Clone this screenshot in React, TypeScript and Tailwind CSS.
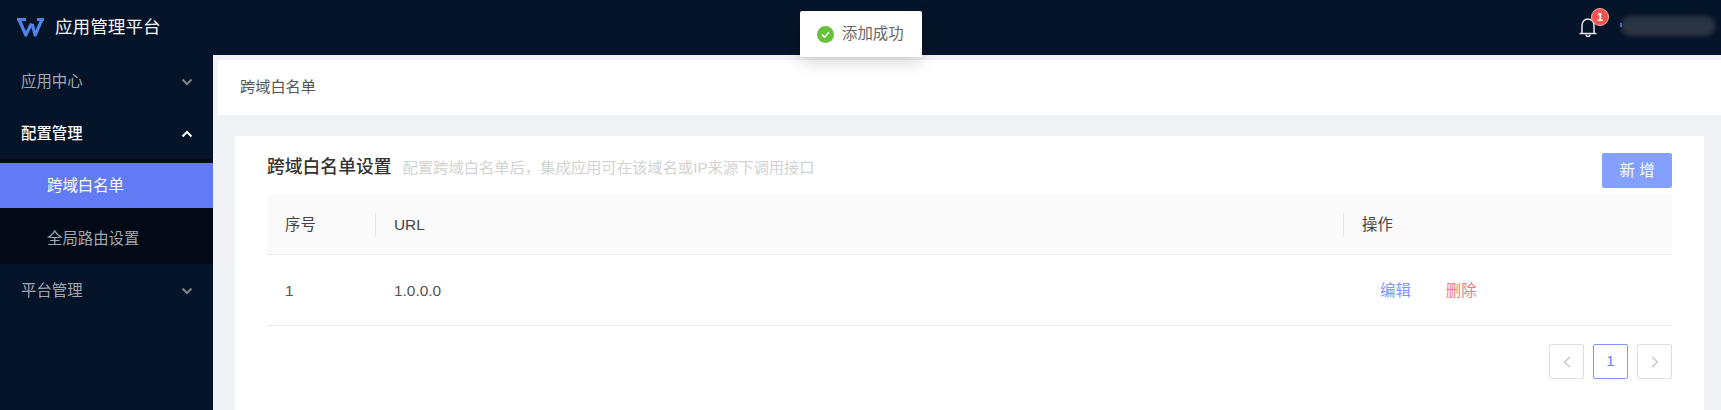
const fontStack = "font-['Liberation_Sans','Noto_Sans_CJK_SC',sans-serif]";

function Chevron({ up, light }: { up?: boolean; light?: boolean }) {
  return (
    <svg width="12" height="8" viewBox="0 0 12 8" fill="none" className={light ? "text-white" : "text-[#7d838d]"}>
      <path d={up ? "M1.5 6.5 L6 2 L10.5 6.5" : "M1.5 1.5 L6 6 L10.5 1.5"} stroke="currentColor" strokeWidth="2" />
    </svg>
  );
}

function MenuItem({ label, open }: { label: string; open?: boolean }) {
  return (
    <div className={`flex h-[52px] items-center justify-between pl-[21px] pr-[20px] pt-[2px] text-[15.4px] ${open ? "font-medium text-white" : "text-[#a3a7ad]"}`}>
      <span>{label}</span>
      <Chevron up={open} light={open} />
    </div>
  );
}

function PageButton({ children, active }: { children: React.ReactNode; active?: boolean }) {
  return (
    <div className={`flex h-[35px] w-[35px] items-center justify-center rounded-[2px] border text-[15px] ${active ? "border-[#7f97f7] text-[#627bf5]" : "border-[#dedede] text-[#c4c4c4]"}`}>
      {children}
    </div>
  );
}

export default function App() {
  return (
    <div className={`relative h-[410px] w-[1721px] overflow-hidden bg-[#f0f2f5] ${fontStack}`}>
      <header className="flex h-[55px] items-center justify-between bg-[#061429] pl-[17px] pr-[6px]">
        <div className="flex items-center gap-[11px]">
          <svg width="27" height="21" viewBox="0 0 27 21" fill="none">
            <path d="M2.2 3 L8.8 18 L14.6 6.5 M15.2 7 L18.2 18 L24.8 3" stroke="#4f83ea" strokeWidth="3.2" strokeLinejoin="round" />
            <path d="M0 2.5 H9 M20 2.5 H27" stroke="#4f83ea" strokeWidth="2.8" />
          </svg>
          <span className="text-[17.6px] text-[#f2f4f7]">应用管理平台</span>
        </div>
        <div className="flex items-center">
          <div className="relative mr-[24px] -mt-[1px] ml-[1px]">
            <svg width="18" height="20" viewBox="0 0 18 20" fill="none" stroke="#e6e8eb" strokeWidth="1.5" className="block">
              <path d="M0.5 16.5 H17.5 M3 16.5 V8 a6 6 0 0 1 12 0 V16.5" />
              <path d="M7 17.5 a2 2 0 0 0 4 0" />
            </svg>
            <span className="absolute -right-[12px] -top-[9px] flex h-[18px] w-[18px] items-center justify-center rounded-full border border-[#f4a5a3] bg-[#ef5350] text-[11px] font-bold text-white">1</span>
          </div>
          <div className="relative -mt-[4px] h-[20px] w-[94px]">
            <div className="h-full w-full rounded-[9px] bg-[#2b3443] blur-[2px]" />
            <span className="absolute -left-[1px] top-[7px] h-[4px] w-[2px] bg-[#3f68c9]" />
          </div>
        </div>
      </header>

      <div className="flex h-[355px]">
        <aside className="w-[213px] shrink-0 bg-[#061429]">
          <MenuItem label="应用中心" />
          <MenuItem label="配置管理" open />
          <div className="h-[105px] bg-[#020a17] pt-[4px] text-[15.4px]">
            <div className="flex h-[45px] items-center bg-[#627bf5] pl-[47px] pt-[1px] text-white">跨域白名单</div>
            <div className="flex h-[60px] items-center pl-[47px] pt-[2px] text-[#a3a7ad]">全局路由设置</div>
          </div>
          <MenuItem label="平台管理" />
        </aside>

        <main className="flex min-w-0 flex-1 flex-col pl-[5px] pt-[5px]">
          <div className="flex h-[55px] shrink-0 items-center bg-white pl-[22px] text-[15.2px] text-[#555]">跨域白名单</div>
          <section className="ml-[17px] mr-[17px] mt-[21px] flex-1 bg-white px-[32px]">
            <div className="flex h-[59px] items-start justify-between">
              <div className="flex items-baseline gap-[11px] pt-[19px]">
                <h2 className="text-[17.8px] font-medium leading-[24px] text-[#333]">跨域白名单设置</h2>
                <p className="text-[15.3px] text-[#d2d2d2]">配置跨域白名单后，集成应用可在该域名或IP来源下调用接口</p>
              </div>
              <button className="mt-[17px] h-[35px] w-[70px] rounded-[2px] bg-[#84a0ff] text-[15.4px] text-white">新 增</button>
            </div>

            <div className="grid h-[60px] grid-cols-[109px_968px_1fr] items-center border-b border-[#ebebeb] bg-[#fafafa] text-[15.4px] text-[#444]">
              <div className="border-r border-[#e8e8e8] pl-[18px] leading-[24px]">序号</div>
              <div className="border-r border-[#e8e8e8] pl-[18px] leading-[24px]">URL</div>
              <div className="pl-[18px] leading-[24px]">操作</div>
            </div>
            <div className="grid h-[71px] grid-cols-[109px_968px_1fr] items-center border-b border-[#ebebeb] pt-[2px] text-[15.4px] text-[#555]">
              <div className="pl-[18px]">1</div>
              <div className="pl-[18px]">1.0.0.0</div>
              <div className="flex gap-[35px] pl-[36px]">
                <span className="text-[#7f93f8]">编辑</span>
                <span className="text-[#f27c7c]">删除</span>
              </div>
            </div>

            <div className="mt-[18px] flex justify-end gap-[9px]">
              <PageButton>
                <svg width="10" height="14" viewBox="0 0 10 14" fill="none" stroke="currentColor" strokeWidth="1.3"><path d="M8 2 L2.5 7 L8 12" /></svg>
              </PageButton>
              <PageButton active>1</PageButton>
              <PageButton>
                <svg width="10" height="14" viewBox="0 0 10 14" fill="none" stroke="currentColor" strokeWidth="1.3"><path d="M2 2 L7.5 7 L2 12" /></svg>
              </PageButton>
            </div>
          </section>
        </main>
      </div>

      {/* toast floats over the header */}
      <div className="absolute left-[800px] top-[11px] flex h-[46px] w-[122px] items-center gap-[8px] rounded-[2px] bg-white pl-[17px] text-[15.4px] text-[#666] shadow-[0_5px_16px_rgba(0,0,0,0.16)]">
        <svg width="17" height="17" viewBox="0 0 17 17" fill="none">
          <circle cx="8.5" cy="8.5" r="8.5" fill="#67c23a" />
          <path d="M5 8.7 L7.6 11.2 L12 6.3" stroke="white" strokeWidth="1.6" />
        </svg>
        <span>添加成功</span>
      </div>
    </div>
  );
}
